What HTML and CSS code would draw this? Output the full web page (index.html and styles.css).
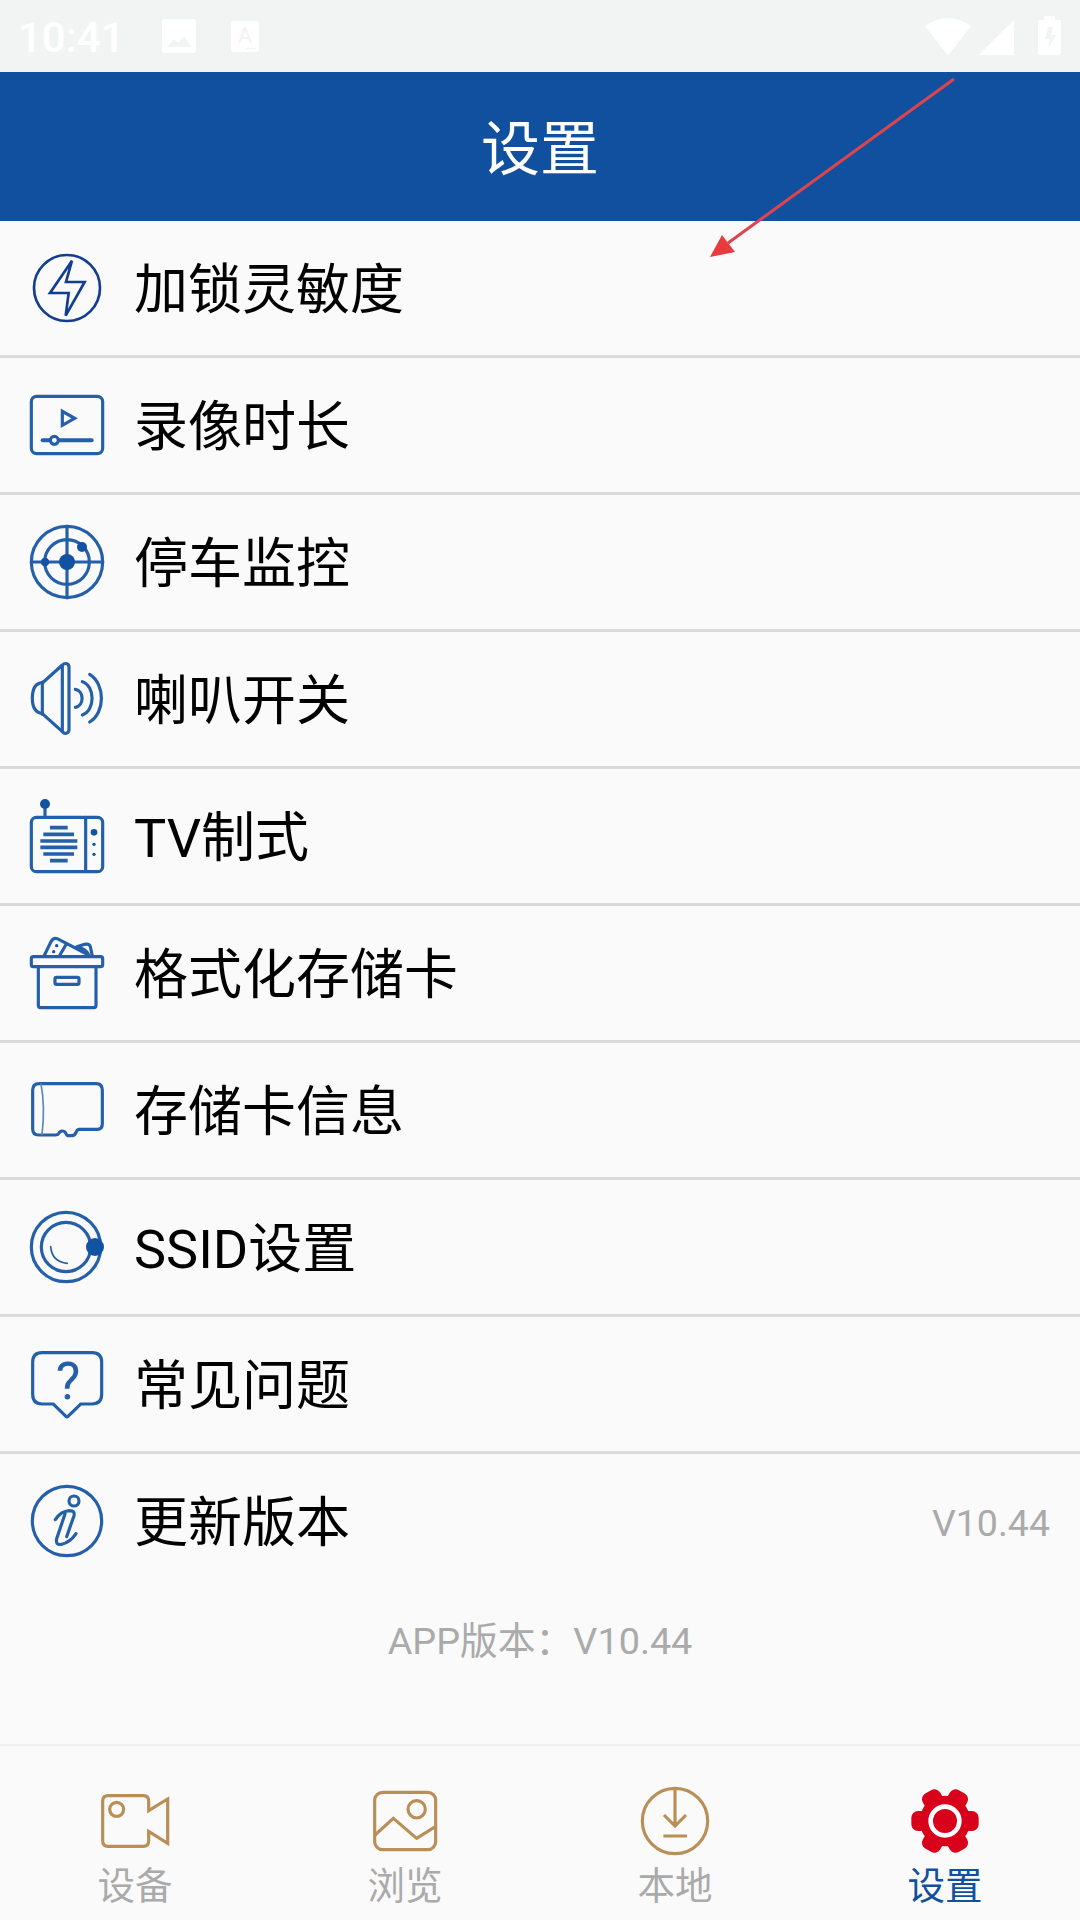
FILE: index.html
```html
<!DOCTYPE html>
<html lang="zh-CN">

<head>
    <meta charset="utf-8">
    <title>设置</title>
    <link rel="stylesheet" href="styles.css">
</head>

<body>
    <div class="status-bar">
        <span class="time">10:41</span>
        <svg class="status-image" viewBox="0 0 34 34">
            <rect width="34" height="34" rx="3" fill="#fff" />
            <path d="M5 28 L12 20 L16 24 L22 17 L30 28Z" fill="#f2f4f4" />
        </svg>
        <svg class="status-input" viewBox="0 0 28 31">
            <rect width="28" height="31" rx="3" fill="#fff" />
            <text x="14" y="22" text-anchor="middle">A</text>
            <path d="M15 27.500H25" stroke="#f2f4f4" stroke-width="1.500" />
        </svg>
        <div class="status-right">
            <svg class="wifi" viewBox="0 0 46 37">
                <path d="M0 8 Q23 -8 46 8 L25 35 Q23 38 21 35Z" />
            </svg>
            <svg class="signal" viewBox="0 0 35 35">
                <path d="M35 0V35H0Z" />
            </svg>
            <svg class="battery" viewBox="0 0 23 39">
                <path d="M6 0H17V4H21Q23 4 23 6V37Q23 39 21 39H2Q0 39 0 37V6Q0 4 2 4H6Z" />
                <path d="M10 11H15L13 19H18L10 33L12 23H7Z" fill="#f2f4f4" />
            </svg>
        </div>
    </div>

    <div class="header">
        <h1>设置</h1>
        <svg class="arrow" viewBox="0 0 250 184">
            <path d="M246 3 L20 167" stroke="#de444b" stroke-width="3" />
            <path d="M2 181 L14 159 L27 176Z" fill="#e93b3d" />
        </svg>
    </div>

    <ul class="list">
        <li>
            <svg class="icon dark" viewBox="0 0 222 222">
                <circle cx="111" cy="111" r="99" />
                <path d="M126 29 L108 93 H164 L107 194 L116 126 H60Z" />
            </svg>
            <span>加锁灵敏度</span>
        </li>
        <li>
            <svg class="icon" viewBox="0 0 222 222">
                <rect x="4" y="25" width="214" height="172" rx="16" />
                <path d="M97 70 V112 L134 91Z" />
                <path d="M38 157H185" stroke-width="12" />
                <circle class="bg" cx="73" cy="157" r="12" />
            </svg>
            <span>录像时长</span>
        </li>
        <li>
            <svg class="icon" viewBox="0 0 222 222">
                <circle cx="111" cy="111" r="107" />
                <circle cx="111" cy="111" r="67" />
                <path d="M111 4V218M4 111H218" />
                <g class="solid">
                    <circle cx="111" cy="111" r="24" />
                    <circle cx="156" cy="66" r="15" />
                    <circle cx="45" cy="111" r="13" />
                </g>
            </svg>
            <span>停车监控</span>
        </li>
        <li>
            <svg class="icon" viewBox="0 0 222 222">
                <path d="M37 63 L97 9 Q103 3 111 5 Q117 7 117 16 V202 Q117 211 111 213 Q103 216 97 209 L37 155" />
                <path d="M37 60V157M97 10V208" />
                <path d="M37 62 C12 64 7 90 7 109 C7 130 12 152 37 155" />
                <path d="M136 82C163 86 163 132 136 136M157 59C196 72 196 146 157 159M179 37C226 66 226 152 179 180" />
            </svg>
            <span>喇叭开关</span>
        </li>
        <li>
            <svg class="icon" viewBox="0 0 222 222">
                <rect x="4" y="55" width="214" height="163" rx="15" />
                <path d="M45 15V52M167 55V217" />
                <path class="grill" d="M60 86H113M40 106H132M31 126H142M31 145H142M40 165H132M60 185H113" />
                <g class="solid">
                    <circle cx="45" cy="15" r="15" />
                    <circle cx="192" cy="100" r="10" />
                    <circle cx="192" cy="136" r="5" />
                    <circle cx="192" cy="166" r="5" />
                </g>
            </svg>
            <span>TV制式</span>
        </li>
        <li>
            <svg class="icon" viewBox="0 0 222 222">
                <rect x="4" y="62" width="214" height="30" rx="6" />
                <path d="M25 93V208Q25 215 32 215H191Q198 215 198 208V93" />
                <rect x="75" y="124" width="72" height="21" rx="5" />
                <path d="M42 60L63 17Q70 4 82 8L176 57M109 24L88 60" />
                <path d="M140 32L164 25Q178 22 181 32L187 60M146 37Q162 35 174 52" />
                <g class="solid">
                    <circle cx="80" cy="29" r="5" />
                    <circle cx="71" cy="47" r="5" />
                </g>
            </svg>
            <span>格式化存储卡</span>
        </li>
        <li>
            <svg class="icon" viewBox="0 0 222 222">
                <path d="M28 32H198Q217 32 217 51V152Q217 169 202 169H146Q141 170 138 178Q134 188 126 188H114Q110 188 107 180Q104 174 98 174Q90 173 86 182Q84 186 76 186H26Q8 186 8 168V51Q8 32 28 32Z" />
                <path class="thin" d="M33 33Q46 100 36 185" />
            </svg>
            <span>存储卡信息</span>
        </li>
        <li>
            <svg class="icon" viewBox="0 0 222 222">
                <circle cx="108" cy="111" r="104" />
                <circle cx="108" cy="111" r="74" />
                <path d="M62 110Q66 156 112 160" stroke-width="5" />
                <circle class="solid" cx="195" cy="111" r="27" />
            </svg>
            <span>SSID设置</span>
        </li>
        <li>
            <svg class="icon" viewBox="0 0 222 222">
                <path d="M36 17H186Q215 17 215 46V142Q215 171 186 171H152L114 208Q111 211 108 208L70 171H36Q8 171 8 142V46Q8 17 36 17Z" />
                <text x="114" y="157" text-anchor="middle">?</text>
            </svg>
            <span>常见问题</span>
        </li>
        <li>
            <svg class="icon" viewBox="0 0 222 222">
                <circle cx="111" cy="111" r="104" />
                <circle cx="132" cy="51" r="15" />
                <path d="M76 107Q92 82 118 80Q136 80 132 95L110 158" />
                <path d="M105 90L80 164Q76 184 94 181Q120 176 138 149" />
            </svg>
            <span>更新版本</span>
            <em>V10.44</em>
        </li>
    </ul>

    <p class="app-version">APP版本：V10.44</p>

    <div class="tabs">
        <div class="tab">
            <svg viewBox="0 0 210 210">
                <path d="M24 29H130Q146 29 146 46V74L203 39V172L146 136V164Q146 181 130 181H24Q8 181 8 164V46Q8 29 24 29Z" />
                <circle cx="50" cy="70" r="21" />
            </svg>
            <span>设备</span>
        </div>
        <div class="tab">
            <svg viewBox="0 0 210 210">
                <rect x="14" y="19" width="183" height="172" rx="24" />
                <circle cx="140" cy="70" r="26" />
                <path d="M15 147L70 97L140 157L196 122" />
            </svg>
            <span>浏览</span>
        </div>
        <div class="tab">
            <svg viewBox="0 0 210 210">
                <circle cx="105" cy="105" r="98" />
                <path d="M105 8V120M72 87L105 120L138 87M70 150H141" />
            </svg>
            <span>本地</span>
        </div>
        <div class="tab active">
            <svg viewBox="0 0 210 210">
                <g class="gear">
                    <circle cx="105" cy="105" r="76" />
                    <rect x="4" y="75" width="202" height="60" rx="20" />
                    <rect x="4" y="75" width="202" height="60" rx="20" transform="rotate(60 105 105)" />
                    <rect x="4" y="75" width="202" height="60" rx="20" transform="rotate(120 105 105)" />
                </g>
                <circle class="ring" cx="105" cy="105" r="43" />
            </svg>
            <span>设置</span>
        </div>
    </div>
</body>

</html>
```
FILE: styles.css
```css
* {
    box-sizing: border-box;
}

body {
    font-family: Roboto, "Noto Sans CJK SC", sans-serif;
    background-color: #fafafa;
    margin: 0;
    padding: 0;
    display: flex;
    flex-direction: column;
    height: 1920px;
}

.status-bar {
    background-color: #f2f4f4;
    color: #fff;
    height: 72px;
    padding: 0 19px 0 18px;
    display: flex;
    align-items: center;
}

.time {
    font-size: 42px;
    font-weight: 500;
    width: 144px;
    padding-top: 2px;
}

.status-image {
    width: 34px;
    height: 34px;
    margin-right: 35px;
}

.status-input {
    width: 28px;
    height: 31px;
}

.status-input text {
    font-size: 22px;
    fill: #f2f4f4;
}

.status-right {
    margin-left: auto;
    display: flex;
    align-items: flex-end;
    height: 39px;
    margin-bottom: 2px;
    fill: #fff;
}

.wifi {
    width: 46px;
    height: 37px;
    margin-right: 8px;
}

.signal {
    width: 35px;
    height: 35px;
    margin-right: 24px;
}

.battery {
    width: 23px;
    height: 39px;
}

.header {
    position: relative;
    background-color: #11509e;
    color: #fff;
    height: 149px;
    display: flex;
    justify-content: center;
    align-items: center;
}

.header h1 {
    margin: 0;
    padding-bottom: 4px;
    font-size: 59px;
    font-weight: normal;
}

/* runs from the header down over the first row */
.arrow {
    position: absolute;
    left: 708px;
    top: 4px;
    width: 250px;
    height: 184px;
}

.list {
    list-style: none;
    margin: 0;
    padding: 0;
}

.list li {
    height: 137px;
    padding: 0 30px;
    border-bottom: 3px solid #dadada;
    display: flex;
    align-items: center;
    font-size: 54px;
    color: #000;
}

.list li:last-child {
    height: 134px;
    border-bottom: none;
}

.list span {
    padding-bottom: 6px;
}

.list em {
    margin-left: auto;
    padding-top: 4px;
    font-size: 37.5px;
    font-style: normal;
    color: #aaa;
}

.icon {
    width: 74px;
    height: 74px;
    margin-right: 30px;
    fill: none;
    stroke: #245fa9;
    stroke-width: 9.5;
    stroke-linecap: round;
    overflow: visible;
}

.icon.dark {
    stroke: #123d92;
    stroke-width: 8;
}

.icon .solid {
    fill: #1252a2;
    stroke: none;
}

.icon .bg {
    fill: #fafafa;
}

.icon .grill {
    stroke-width: 11;
    stroke-linecap: butt;
}

.icon .thin {
    stroke: #5c86bd;
    stroke-width: 5;
}

.icon text {
    font-family: Roboto, sans-serif;
    font-size: 156px;
    font-weight: 400;
    fill: #245fa9;
    stroke: none;
}

.app-version {
    margin: 26px 0 0;
    font-size: 37.8px;
    line-height: 54px;
    text-align: center;
    color: #aaa;
}

.tabs {
    margin-top: auto;
    height: 176px;
    border-top: 2px solid #f0f0f0;
    display: flex;
}

.tab {
    flex: 1;
    display: flex;
    flex-direction: column;
    align-items: center;
    padding-top: 40px;
    font-size: 37.5px;
    line-height: 60px;
    color: #aaa;
}

.tab svg {
    width: 70px;
    height: 70px;
    fill: none;
    stroke: #b98f57;
    stroke-width: 9.5;
}

.tab.active {
    color: #11509e;
}

.tab .gear {
    fill: #d9001b;
    stroke: none;
}

.tab .ring {
    stroke: #fff;
    stroke-width: 14;
}
```
